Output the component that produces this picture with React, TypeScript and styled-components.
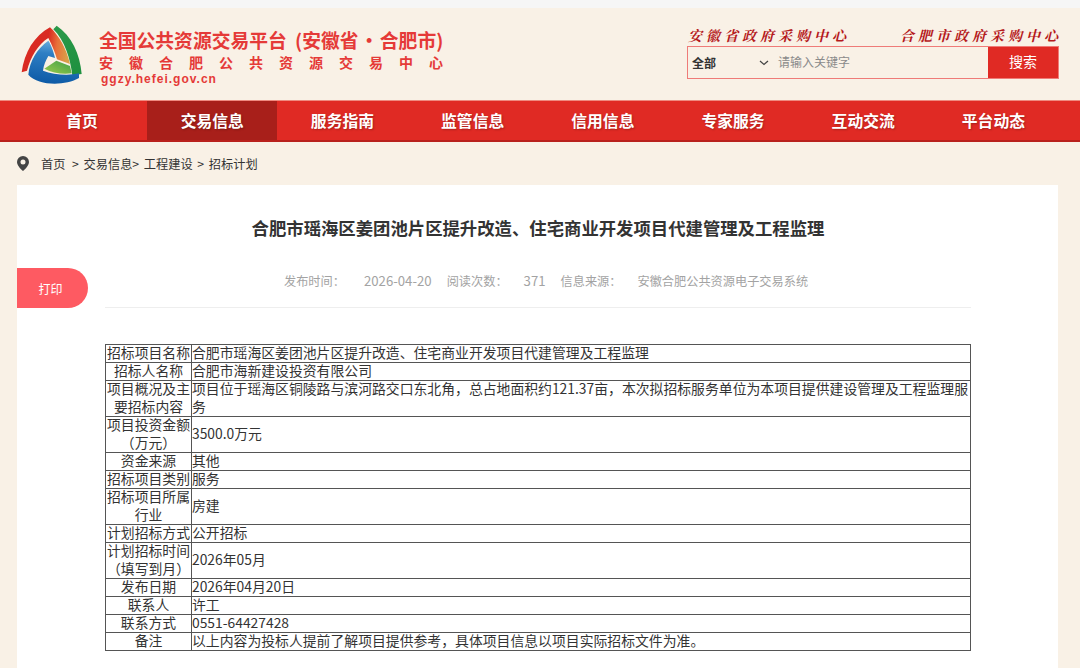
import React from 'react'
import styled, { createGlobalStyle } from 'styled-components'

const CJK = `"Noto Sans CJK SC", "Liberation Sans", sans-serif`

const GlobalStyle = createGlobalStyle`
html, body {
  margin: 0;
  padding: 0;
  background: #f9f1e6;
  font-family: ${CJK};
  text-spacing-trim: space-all;
}
* { box-sizing: border-box; }
`

const Page = styled.div`
  width: 1080px;
  height: 668px;
  overflow: hidden;
  background: #f9f1e6;
`

const TopStrip = styled.div`
  height: 8px;
  background: #f6f6f6;
`

const Header = styled.header`
  height: 92px;
  padding: 16px 21px 0 21px;
  display: flex;
  justify-content: space-between;
`

const Brand = styled.div`
  display: flex;
  align-items: flex-start;
`

const BrandText = styled.div`
  margin-left: 14px;
  padding-top: 3px;
  width: 344px;
  color: #e53a38;
`

const BrandTitle = styled.div`
  font-size: 18.8px;
  line-height: 26px;
  font-weight: 700;
  white-space: nowrap;
`

const BrandRegion = styled.span`
  margin-left: 4px;
  word-spacing: -3px;
`

const BrandSub = styled.div`
  font-size: 14px;
  line-height: 18px;
  font-weight: 700;
  display: flex;
  justify-content: space-between;
`

const BrandUrl = styled.div`
  font-family: "Liberation Sans", sans-serif;
  font-size: 12px;
  line-height: 16px;
  font-weight: 700;
  letter-spacing: 1px;
  padding-left: 2px;
`

const HeaderRight = styled.div`
  width: 372px;
  padding-top: 1px;
`

const Centers = styled.div`
  display: flex;
  justify-content: space-between;
  margin-right: -3px;
  padding-left: 1px;
  height: 21px;
  color: #b5191c;
  font-family: "Noto Serif CJK SC", "Noto Sans CJK SC", serif;
  font-size: 14px;
  line-height: 20px;
  font-weight: 700;
  font-style: italic;
`

const CenterName = styled.span`
  letter-spacing: 4px;
  white-space: nowrap;
`

const SearchBar = styled.div`
  height: 33px;
  display: flex;
  border: 1px solid #ef7b78;
  align-items: stretch;
`

const ScopeSelect = styled.div`
  width: 90px;
  padding: 0 9px 0 4px;
  display: flex;
  align-items: center;
  justify-content: space-between;
  font-size: 12px;
  font-weight: 700;
  color: #333;
`

const Placeholder = styled.div`
  flex: 1;
  display: flex;
  align-items: center;
  padding-bottom: 2px;
  font-size: 12px;
  color: #8a8a8a;
`

const SearchButton = styled.div`
  width: 70px;
  background: #e02a24;
  color: #fff;
  font-size: 14px;
  padding-bottom: 4px;
  display: flex;
  align-items: center;
  justify-content: center;
`

const Nav = styled.nav`
  height: 42px;
  background: #e02a24;
  border-top: 1px solid #ef8a80;
  border-bottom: 2px solid #b9211c;
  display: flex;
  padding-left: 17px;
`

const NavItem = styled.a<{ $active?: boolean }>`
  width: 130.2px;
  display: flex;
  align-items: center;
  justify-content: center;
  color: #fff;
  font-size: 15.8px;
  font-weight: 700;
  text-shadow: 1px 1px 2px rgba(0, 0, 0, 0.25);
  background: ${p => (p.$active ? '#a81f1a' : 'transparent')};
`

const Crumbs = styled.div`
  height: 43px;
  padding-left: 17px;
  display: flex;
  align-items: center;
  font-size: 12.2px;
  color: #333;
`

const CrumbText = styled.span`
  margin-left: 12px;
  white-space: pre;
  word-spacing: 2px;
`

const CrumbHome = styled.span`
  margin-right: 2px;
`

const Card = styled.main`
  margin: 0 22px 0 17px;
  height: 500px;
  background: #fff;
  position: relative;
  padding: 0 87px 0 88px;
`

const Title = styled.h1`
  margin: 0;
  padding-top: 30px;
  height: 75px;
  font-size: 17.38px;
  line-height: 26px;
  font-weight: 700;
  color: #333;
  text-align: center;
  white-space: nowrap;
`

const Meta = styled.div`
  height: 48px;
  padding: 12px 0 0 179px;
  border-bottom: 1px solid #eeeeee;
  display: flex;
  font-size: 12.2px;
  line-height: 18px;
  color: #a3a3a3;
`

const MetaLabel = styled.span<{ $gap: number }>`
  margin-right: ${p => p.$gap}px;
`

const MetaValue = styled(MetaLabel)`
  font-size: 13.2px;
`

const PrintTab = styled.div`
  position: absolute;
  left: 0;
  top: 83px;
  width: 71px;
  height: 40px;
  background: #fe5a62;
  border-radius: 0 20px 20px 0;
  color: #fff;
  font-size: 12px;
  display: flex;
  align-items: center;
  justify-content: center;
  padding-right: 4px;
`

const InfoTable = styled.table`
  width: 866px;
  margin-top: 36px;
  border-collapse: separate;
  border-spacing: 0;
  table-layout: fixed;
  font-size: 13.85px;
  color: #333;
  border-right: 1px solid #555;
  border-bottom: 1px solid #555;
`

const Row = styled.tr<{ $lines: number }>`
  height: ${p => p.$lines * 18}px;
  line-height: ${p => (p.$lines > 1 ? 17.5 : 17)}px;
`

const LabelCell = styled.td`
  width: 86px;
  border-left: 1px solid #555;
  border-top: 1px solid #555;
  padding: 0;
  text-align: center;
`

const ValueCell = styled.td`
  border-left: 1px solid #555;
  border-top: 1px solid #555;
  padding: 0;
  text-align: left;
`

const CellText = styled.div`
  margin: -1px 0 1px;
`

const rows: [string, string, number][] = [
  ['招标项目名称', '合肥市瑶海区姜团池片区提升改造、住宅商业开发项目代建管理及工程监理', 1],
  ['招标人名称', '合肥市海新建设投资有限公司', 1],
  ['项目概况及主要招标内容', '项目位于瑶海区铜陵路与滨河路交口东北角，总占地面积约121.37亩，本次拟招标服务单位为本项目提供建设管理及工程监理服务', 2],
  ['项目投资金额（万元）', '3500.0万元', 2],
  ['资金来源', '其他', 1],
  ['招标项目类别', '服务', 1],
  ['招标项目所属行业', '房建', 2],
  ['计划招标方式', '公开招标', 1],
  ['计划招标时间（填写到月）', '2026年05月', 2],
  ['发布日期', '2026年04月20日', 1],
  ['联系人', '许工', 1],
  ['联系方式', '0551-64427428', 1],
  ['备注', '以上内容为投标人提前了解项目提供参考，具体项目信息以项目实际招标文件为准。', 1],
]

const navItems = ['首页', '交易信息', '服务指南', '监管信息', '信用信息', '专家服务', '互动交流', '平台动态']

const Logo = () => (
  <svg width="64" height="62" viewBox="18 20 192 186">
    <defs>
      <linearGradient id="warm" x1="0.15" y1="0.5" x2="0.95" y2="0.6">
        <stop offset="0.45" stopColor="#d92a22" />
        <stop offset="0.7" stopColor="#e8703a" />
        <stop offset="1" stopColor="#d9a048" />
      </linearGradient>
      <linearGradient id="leaf" x1="0" y1="0" x2="0.6" y2="1">
        <stop offset="0" stopColor="#2c9a4a" />
        <stop offset="1" stopColor="#1f9140" />
      </linearGradient>
      <linearGradient id="sea" x1="0.5" y1="0" x2="0.4" y2="1">
        <stop offset="0" stopColor="#6aaede" />
        <stop offset="0.3" stopColor="#2f7fc4" />
        <stop offset="1" stopColor="#0d5aa6" />
      </linearGradient>
      <linearGradient id="lime" x1="0" y1="1" x2="1" y2="0">
        <stop offset="0" stopColor="#9ccb4a" />
        <stop offset="1" stopColor="#3f9f48" />
      </linearGradient>
    </defs>
    <path d="M20 165 C28 105 58 55 105 30 C132 55 155 95 165 140 L126 126 C120 105 112 85 100 62 C70 80 46 120 36 160 Z" fill="url(#warm)" />
    <path d="M125 25 C170 55 195 110 200 170 L172 174 C166 125 150 70 115 36 Z" fill="url(#leaf)" />
    <path d="M40 172 C44 130 68 92 100 70 C108 82 116 102 120 122 L100 116 C92 130 86 144 84 160 C115 172 160 176 192 168 L192 182 C150 206 70 206 40 172 Z" fill="url(#sea)" />
    <path d="M88 154 L124 130 L165 146 L170 168 C140 172 112 166 88 154 Z" fill="url(#lime)" />
  </svg>
)

const PinIcon = () => (
  <svg width="12" height="15" viewBox="0 0 12 15">
    <path fillRule="evenodd" d="M6 0a6 6 0 0 1 6 6c0 3.500-3.600 7-6 9-2.400-2-6-5.500-6-9a6 6 0 0 1 6-6zm0 3.500a2.500 2.500 0 1 0 0 5 2.500 2.500 0 0 0 0-5z" fill="#444" />
  </svg>
)

const Chevron = () => (
  <svg width="10" height="6" viewBox="0 0 10 6">
    <path d="M1 1l4 3.500L9 1" fill="none" stroke="#444" strokeWidth="1.300" />
  </svg>
)

export default function App() {
  return (
    <Page>
      <GlobalStyle />
      <TopStrip />
      <Header>
        <Brand>
          <Logo />
          <BrandText>
            <BrandTitle>全国公共资源交易平台 <BrandRegion>(安徽省 · 合肥市)</BrandRegion></BrandTitle>
            <BrandSub>
              {'安徽合肥公共资源交易中心'.split('').map((c, i) => <span key={i}>{c}</span>)}
            </BrandSub>
            <BrandUrl>ggzy.hefei.gov.cn</BrandUrl>
          </BrandText>
        </Brand>
        <HeaderRight>
          <Centers>
            <CenterName>安徽省政府采购中心</CenterName>
            <CenterName>合肥市政府采购中心</CenterName>
          </Centers>
          <SearchBar>
            <ScopeSelect>全部<Chevron /></ScopeSelect>
            <Placeholder>请输入关键字</Placeholder>
            <SearchButton>搜索</SearchButton>
          </SearchBar>
        </HeaderRight>
      </Header>
      <Nav>
        {navItems.map(n => <NavItem key={n} $active={n === '交易信息'}>{n}</NavItem>)}
      </Nav>
      <Crumbs>
        <PinIcon />
        <CrumbText><CrumbHome>首页</CrumbHome> &gt; 交易信息&gt; 工程建设 &gt; 招标计划</CrumbText>
      </Crumbs>
      <Card>
        <Title>合肥市瑶海区姜团池片区提升改造、住宅商业开发项目代建管理及工程监理</Title>
        <Meta>
          <MetaLabel $gap={19}>发布时间：</MetaLabel>
          <MetaValue $gap={15}>2026-04-20</MetaValue>
          <MetaLabel $gap={16}>阅读次数：</MetaLabel>
          <MetaValue $gap={15}>371</MetaValue>
          <MetaLabel $gap={16}>信息来源：</MetaLabel>
          <MetaLabel $gap={0}>安徽合肥公共资源电子交易系统</MetaLabel>
        </Meta>
        <PrintTab>打印</PrintTab>
        <InfoTable>
          <tbody>
            {rows.map(([k, v, lines]) => (
              <Row key={k} $lines={lines}>
                <LabelCell><CellText>{k}</CellText></LabelCell>
                <ValueCell><CellText>{v}</CellText></ValueCell>
              </Row>
            ))}
          </tbody>
        </InfoTable>
      </Card>
    </Page>
  )
}
